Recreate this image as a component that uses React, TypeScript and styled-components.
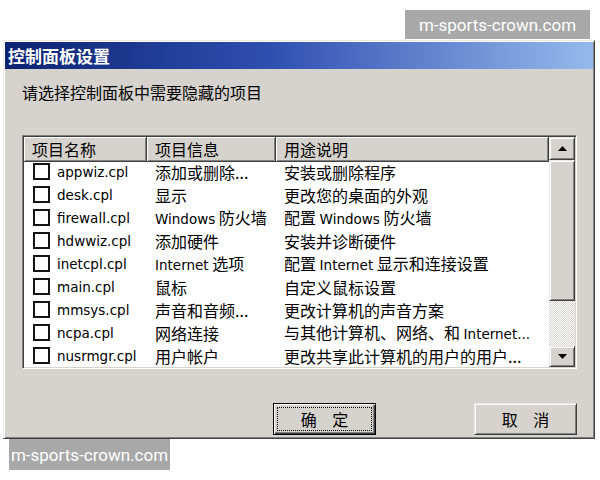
import React from 'react';
import styled, { createGlobalStyle } from 'styled-components';

const GlobalStyle = createGlobalStyle`
  html, body {
    margin: 0;
    padding: 0;
    background: #ffffff;
  }
  * {
    box-sizing: border-box;
  }
`;

const CJK = `"Noto Sans CJK SC", "Noto Sans", sans-serif`;
const LATIN = `"DejaVu Sans", "Noto Sans CJK SC", sans-serif`;
const FACE = '#d6d2cd';

type Item = { file: string; info: string; usage: string };

const items: Item[] = [
  { file: 'appwiz.cpl', info: '添加或删除...', usage: '安装或删除程序' },
  { file: 'desk.cpl', info: '显示', usage: '更改您的桌面的外观' },
  { file: 'firewall.cpl', info: 'Windows 防火墙', usage: '配置 Windows 防火墙' },
  { file: 'hdwwiz.cpl', info: '添加硬件', usage: '安装并诊断硬件' },
  { file: 'inetcpl.cpl', info: 'Internet 选项', usage: '配置 Internet 显示和连接设置' },
  { file: 'main.cpl', info: '鼠标', usage: '自定义鼠标设置' },
  { file: 'mmsys.cpl', info: '声音和音频...', usage: '更改计算机的声音方案' },
  { file: 'ncpa.cpl', info: '网络连接', usage: '与其他计算机、网络、和 Internet...' },
  { file: 'nusrmgr.cpl', info: '用户帐户', usage: '更改共享此计算机的用户的用户...' },
];

const columns = ['项目名称', '项目信息', '用途说明'];

// latin runs are drawn a size smaller, like the tahoma/simsun mix of the original
function mixed(text: string) {
  return text
    .split(/([A-Za-z0-9.]+)/)
    .map((part, i) => (/[A-Za-z]/.test(part) ? <Latin key={i}>{part}</Latin> : part));
}

export default function App() {
  return (
    <Page>
      <GlobalStyle />
      <Dialog>
        <TitleBar>
          <Title>控制面板设置</Title>
        </TitleBar>
        <Body>
          <Prompt>请选择控制面板中需要隐藏的项目</Prompt>
          <ListBox>
            <ListMain>
              <HeaderRow>
                {columns.map((c) => (
                  <HeaderCell key={c}>{c}</HeaderCell>
                ))}
              </HeaderRow>
              <Rows>
                {items.map((it) => (
                  <Row key={it.file}>
                    <FileCell>
                      <CheckBox />
                      <FileName>{it.file}</FileName>
                    </FileCell>
                    <TextCell>{mixed(it.info)}</TextCell>
                    <TextCell>{mixed(it.usage)}</TextCell>
                  </Row>
                ))}
              </Rows>
            </ListMain>
            <ScrollBar>
              <ArrowButton $height={23}>
                <svg width="9" height="5" viewBox="0 0 9 5">
                  <path d="M0 5 L4.5 0 L9 5 Z" fill="#000" />
                </svg>
              </ArrowButton>
              <Thumb />
              <Track />
              <ArrowButton $height={21}>
                <svg width="9" height="5" viewBox="0 0 9 5">
                  <path d="M0 0 L9 0 L4.5 5 Z" fill="#000" />
                </svg>
              </ArrowButton>
            </ScrollBar>
          </ListBox>
          <ButtonBar>
            <DialogButton $isDefault>
              <FocusRing>确 定</FocusRing>
            </DialogButton>
            <DialogButton>
              <FocusRing $hidden>取 消</FocusRing>
            </DialogButton>
          </ButtonBar>
        </Body>
      </Dialog>
      <Watermark $left={405} $top={10} $width={185} $height={29}>
        m-sports-crown.com
      </Watermark>
      <Watermark $left={9} $top={439} $width={161} $height={31}>
        m-sports-crown.com
      </Watermark>
    </Page>
  );
}

const Page = styled.div`
  position: relative;
  width: 600px;
  height: 480px;
  padding: 40px 5px 0 3px;
  overflow: hidden;
`;

const Dialog = styled.div`
  width: 592px;
  padding: 1px;
  background: ${FACE};
  border: 1px solid;
  border-color: #ebe9e5 #404040 #404040 #ebe9e5;
  box-shadow: inset 1px 1px #ffffff, inset -1px -1px #808080;
`;

const TitleBar = styled.div`
  height: 27px;
  display: flex;
  align-items: center;
  padding-left: 3px;
  background: linear-gradient(to right, #0c2470 0%, #2f4fb0 45%, #96b9ec 100%);
`;

const Title = styled.span`
  font-family: ${CJK};
  font-size: 17px;
  font-weight: bold;
  line-height: 20px;
  color: #ffffff;
`;

const Body = styled.div`
  display: flex;
  flex-direction: column;
  padding: 13px 16px 2px 17px;
`;

const Prompt = styled.div`
  font-family: ${CJK};
  font-size: 16px;
  line-height: 20px;
  color: #000;
`;

const ListBox = styled.div`
  margin-top: 33px;
  height: 234px;
  display: flex;
  background: #ffffff;
  border: 1px solid;
  border-color: #808080 #ffffff #ffffff #808080;
  box-shadow: inset 1px 1px #404040, inset -1px -1px ${FACE};
  padding: 1px;
`;

const ListMain = styled.div`
  flex: 1;
  min-width: 0;
  overflow: hidden;
`;

const grid = `
  display: grid;
  grid-template-columns: 123px 129px 1fr;
`;

const HeaderRow = styled.div`
  ${grid}
  height: 23px;
`;

const HeaderCell = styled.div`
  display: flex;
  align-items: center;
  padding-left: 8px;
  background: ${FACE};
  border-right: 1px solid #404040;
  border-bottom: 1px solid #404040;
  box-shadow: inset 1px 1px #ffffff, inset -1px -1px #808080;
  font-family: ${CJK};
  font-size: 16px;
  color: #000;
  white-space: nowrap;
`;

const Rows = styled.div`
  padding-top: 0;
`;

const Row = styled.div`
  ${grid}
  height: 23px;
  align-items: center;
`;

const FileCell = styled.div`
  display: flex;
  align-items: center;
  padding-left: 9px;
  gap: 7px;
`;

const CheckBox = styled.span`
  width: 17px;
  height: 17px;
  border: 2.5px solid #141414;
  background: #ffffff;
  flex: none;
`;

const FileName = styled.span`
  font-family: ${LATIN};
  font-size: 13.5px;
  color: #000;
  white-space: nowrap;
`;

const TextCell = styled.div`
  padding-left: 8px;
  font-family: ${CJK};
  font-size: 16px;
  line-height: 20px;
  color: #000;
  white-space: nowrap;
`;

const Latin = styled.span`
  font-family: ${LATIN};
  font-size: 13.5px;
`;

const ScrollBar = styled.div`
  width: 26px;
  display: flex;
  flex-direction: column;
`;

const raised = `
  background: ${FACE};
  border: 1px solid;
  border-color: #ebe9e5 #404040 #404040 #ebe9e5;
  box-shadow: inset 1px 1px #ffffff, inset -1px -1px #808080;
`;

const ArrowButton = styled.div<{ $height: number }>`
  ${raised}
  height: ${(p) => p.$height}px;
  display: flex;
  align-items: center;
  justify-content: center;
  flex: none;
`;

const Thumb = styled.div`
  ${raised}
  height: 141px;
  flex: none;
`;

const Track = styled.div`
  flex: 1;
  background-color: #ffffff;
  background-image: conic-gradient(${FACE} 25%, #ffffff 0 50%, ${FACE} 0 75%, #ffffff 0);
  background-size: 2px 2px;
`;

const ButtonBar = styled.div`
  margin-top: 34px;
  display: flex;
  justify-content: flex-end;
  gap: 98px;
`;

const DialogButton = styled.div<{ $isDefault?: boolean }>`
  width: 103px;
  height: 32px;
  padding: 3px;
  background: ${FACE};
  border: 1px solid;
  border-color: ${(p) => (p.$isDefault ? '#000 #000 #000 #000' : '#ebe9e5 #404040 #404040 #ebe9e5')};
  box-shadow: ${(p) =>
    p.$isDefault
      ? 'inset 1px 1px #ffffff, inset -1px -1px #404040, inset -2px -2px #808080'
      : 'inset 1px 1px #ffffff, inset -1px -1px #808080'};
`;

const FocusRing = styled.div<{ $hidden?: boolean }>`
  height: 100%;
  display: flex;
  align-items: center;
  justify-content: center;
  border: 1px dotted ${(p) => (p.$hidden ? 'transparent' : '#000')};
  font-family: ${CJK};
  font-size: 16px;
  line-height: 18px;
  word-spacing: 12px;
  color: #000;
`;

const Watermark = styled.div<{ $left: number; $top: number; $width: number; $height: number }>`
  position: absolute;
  left: ${(p) => p.$left}px;
  top: ${(p) => p.$top}px;
  width: ${(p) => p.$width}px;
  height: ${(p) => p.$height}px;
  display: flex;
  align-items: center;
  justify-content: center;
  background: #a8a8a8;
  color: #ffffff;
  font-family: Roboto, "Noto Sans", sans-serif;
  font-size: 17px;
`;
